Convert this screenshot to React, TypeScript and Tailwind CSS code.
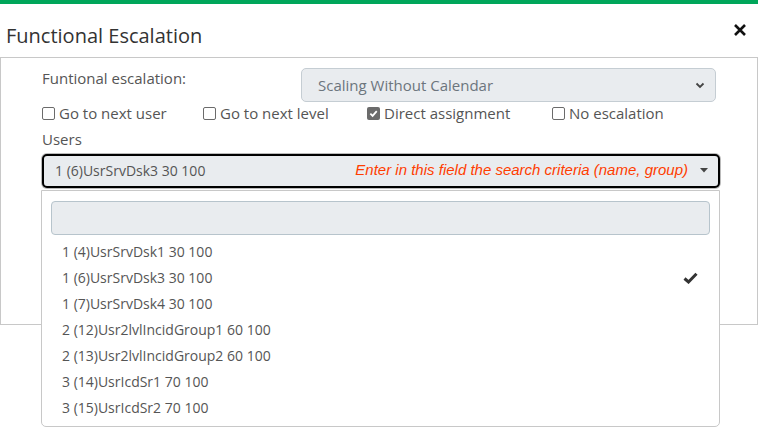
import { useState } from "react";

const users = [
  "1 (4)UsrSrvDsk1 30 100",
  "1 (6)UsrSrvDsk3 30 100",
  "1 (7)UsrSrvDsk4 30 100",
  "2 (12)Usr2lvlIncidGroup1 60 100",
  "2 (13)Usr2lvlIncidGroup2 60 100",
  "3 (14)UsrIcdSr1 70 100",
  "3 (15)UsrIcdSr2 70 100",
];

const options = [
  { label: "Go to next user", checked: false, width: "w-[161px]" },
  { label: "Go to next level", checked: false, width: "w-[164px]" },
  { label: "Direct assignment", checked: true, width: "w-[185px]" },
  { label: "No escalation", checked: false, width: "" },
];

function Box({ checked }: { checked: boolean }) {
  return checked ? (
    <span className="flex h-[13px] w-[13px] items-center justify-center rounded-[2px] bg-[#6b6b6b]">
      <svg width="9" height="9" viewBox="0 0 10 10">
        <path d="M1.5 5.2 L4 7.6 L8.6 2.4" stroke="white" strokeWidth="2" fill="none" />
      </svg>
    </span>
  ) : (
    <span className="h-[13px] w-[13px] rounded-[2px] border border-[#6b6b6b] bg-white" />
  );
}

export default function App() {
  const [selected] = useState(1);

  return (
    <div className="h-[428px] w-[758px] overflow-hidden bg-white font-['Open_Sans',sans-serif] text-[#555]">
      <div className="h-[4px] bg-[#00a65a]" />
      <div className="flex h-[53px] items-center justify-between pl-[6px] pr-[11px]">
        <h2 className="mt-[10px] text-[20px] text-[#333]">Functional Escalation</h2>
        <svg width="14" height="14" viewBox="0 0 14 14" className="-mt-[2px]">
          <path d="M2 2 L12 12 M12 2 L2 12" stroke="#111" strokeWidth="2.6" />
        </svg>
      </div>

      <div className="relative h-[268px] border border-[#c8c8c8] pl-[41px] pr-[41px] pt-[10px]">
        <div className="flex items-center">
          <span className="w-[259px] -mt-[14px] text-[15px]">Funtional escalation:</span>
          <div className="flex h-[34px] w-[415px] items-center justify-between rounded-[5px] border border-[#c5cdd3] bg-[#e9ecef] pl-[16px] pr-[10px] text-[15px] text-[#6c757d]">
            <span>Scaling Without Calendar</span>
            <svg width="10" height="7" viewBox="0 0 10 7">
              <path d="M1.5 1.5 L5 5 L8.5 1.5" stroke="#444" strokeWidth="1.8" fill="none" />
            </svg>
          </div>
        </div>

        <div className="flex h-[22px] items-center text-[15px]">
          {options.map((o) => (
            <label key={o.label} className={`flex items-center gap-[4px] ${o.width}`}>
              <Box checked={o.checked} />
              <span>{o.label}</span>
            </label>
          ))}
        </div>

        <div className="mt-[4px] text-[15px]">Users</div>

        <div className="relative mt-[3px] w-[678px]">
          <div className="flex h-[34px] items-center justify-between rounded-[5px] border-2 border-black bg-[#e9ecef] pl-[11px] pr-[10px] text-[14px] shadow-[0_0_0_1px_#bbb]">
            <span className="text-[#555]">{users[selected]}</span>
            <div className="flex items-center gap-[12px]">
              <span className="font-['Liberation_Sans',sans-serif] text-[15px] italic text-[#ff3d00]">
                Enter in this field the search criteria (name, group)
              </span>
              <svg width="8" height="5" viewBox="0 0 8 5">
                <path d="M0 0 L8 0 L4 4.5 Z" fill="#444" />
              </svg>
            </div>
          </div>

          <div className="absolute left-[-1px] top-[36px] z-10 h-[237px] w-[679px] rounded-b-[5px] border border-[#c8c8c8] bg-white px-[9px] pt-[10px]">
            <div className="h-[34px] rounded-[4px] border border-[#b7c4cc] bg-[#e9ecef]" />
            <ul className="mt-[4px]">
              {users.map((u, i) => (
                <li key={u} className="flex h-[26px] items-center justify-between pl-[11px] pr-[12px] text-[14px] text-[#555]">
                  <span>{u}</span>
                  {i === selected && (
                    <svg width="15" height="12" viewBox="0 0 15 12">
                      <path d="M1.5 6.5 L5.5 10 L13.5 1.8" stroke="#333" strokeWidth="3" fill="none" />
                    </svg>
                  )}
                </li>
              ))}
            </ul>
          </div>
        </div>
      </div>
    </div>
  );
}
